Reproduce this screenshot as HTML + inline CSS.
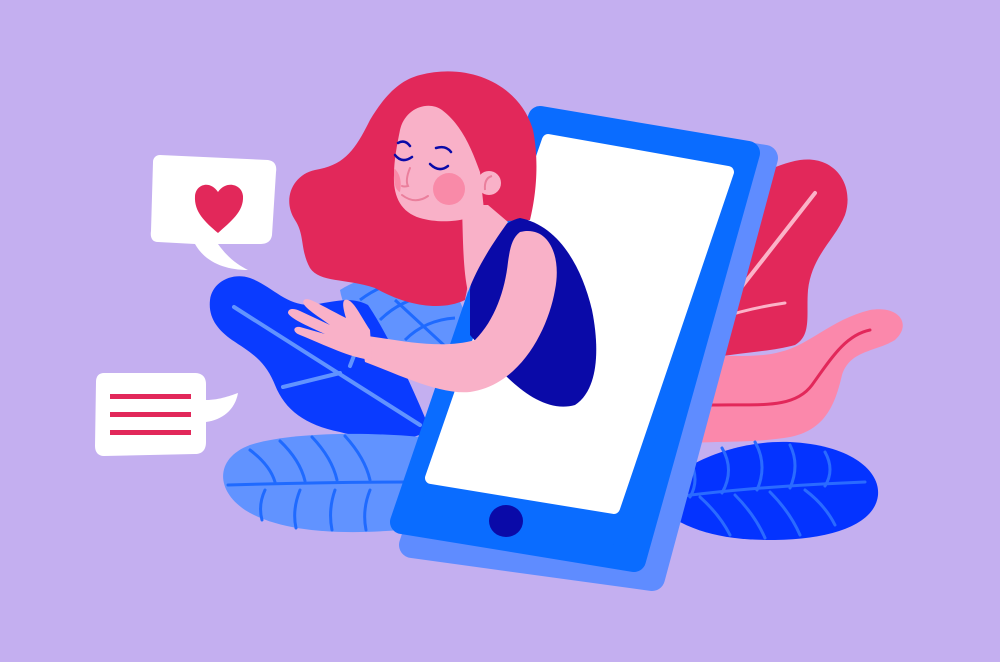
<!DOCTYPE html>
<html><head><meta charset="utf-8"><style>
html,body{margin:0;padding:0;background:#c4aff0;}
svg{display:block}
</style></head><body>
<svg width="1000" height="662" viewBox="0 0 1000 662" xmlns="http://www.w3.org/2000/svg">
<rect width="1000" height="662" fill="#c4aff0"/>

<!-- red leaf right -->
<path d="M720,200 C740,185 770,165 800,160 C835,155 855,185 845,215 C835,240 812,255 808,290 C806,315 812,335 795,345 C770,352 740,352 700,360 Z" fill="#e2285a"/>
<path d="M815,193 L722,312" stroke="#fbb3c8" stroke-width="4" stroke-linecap="round"/>
<path d="M785,303 Q750,308 720,318" stroke="#fbb3c8" stroke-width="3" fill="none" stroke-linecap="round"/>

<!-- pink leaf -->
<path d="M690,360 C720,352 750,360 780,352 C810,345 830,320 870,310 C900,305 912,325 895,340 C875,352 850,350 842,375 C835,405 825,430 790,437 C750,444 710,440 670,445 Z" fill="#fb88ab"/>
<path d="M688,407 C740,400 790,415 812,385 C830,360 845,335 870,330" stroke="#e2285a" stroke-width="3" fill="none" stroke-linecap="round"/>

<!-- dark blue leaf right bottom -->
<path d="M650,500 C680,460 740,440 790,442 C850,445 880,470 878,495 C875,525 830,540 770,540 C720,540 680,530 650,500 Z" fill="#0433ff"/>
<g stroke="#2a6bff" stroke-width="3" fill="none" stroke-linecap="round">
<path d="M655,500 C720,490 790,485 865,482"/>
<path d="M690,460 Q700,480 690,497"/><path d="M722,448 Q735,470 722,493"/><path d="M755,442 Q768,465 757,490"/><path d="M790,445 Q800,465 790,488"/><path d="M825,452 Q835,470 825,486"/>
<path d="M700,497 Q720,515 730,535"/><path d="M735,495 Q755,515 765,538"/><path d="M770,492 Q790,512 800,535"/><path d="M805,490 Q825,505 835,525"/>
</g>

<!-- light blue leaf behind hair -->
<path d="M340,290 C370,270 420,270 450,290 C470,305 470,340 455,360 L400,360 C370,340 345,320 340,290 Z" fill="#6193ff"/>
<g stroke="#1f6aff" stroke-width="3" fill="none"><path d="M360,300 Q380,285 400,282"/><path d="M380,320 Q400,300 430,295"/><path d="M405,340 Q425,320 455,318"/><path d="M395,300 L460,360"/></g>

<!-- dark blue leaf left -->
<path d="M210,300 C212,282 232,272 250,278 C272,286 285,305 310,305 C330,303 350,295 368,305 C385,330 410,380 430,430 C405,445 370,440 340,432 C305,425 285,410 275,385 C265,360 250,352 232,340 C218,330 208,318 210,300 Z" fill="#0a3bff"/>
<g stroke="#6193ff" stroke-width="4" fill="none" stroke-linecap="round"><path d="M234,307 L420,425"/><path d="M283,387 L340,373"/><path d="M350,366 L360,340"/></g>

<!-- lower left light blue leaf -->
<path d="M420,437 C370,432 290,432 250,445 C215,458 215,490 245,510 C280,532 340,535 400,530 Z" fill="#6193ff"/>
<g stroke="#1f6aff" stroke-width="3" fill="none" stroke-linecap="round">
<path d="M228,485 C290,483 350,482 410,482"/>
<path d="M250,450 Q270,465 275,482"/><path d="M280,441 Q300,460 305,481"/><path d="M312,437 Q332,458 337,480"/><path d="M345,436 Q365,458 370,480"/>
<path d="M265,490 Q258,505 262,520"/><path d="M300,490 Q292,510 296,528"/><path d="M335,490 Q328,510 332,530"/><path d="M370,490 Q362,510 366,530"/>
</g>

<!-- phone side -->
<polygon points="552,122 765,158 652,578 412,545" fill="#5f8cff" stroke="#5f8cff" stroke-width="26" stroke-linejoin="round"/>
<!-- phone front -->
<polygon points="540,118 748,153 634,560 402,522" fill="#0a6cff" stroke="#0a6cff" stroke-width="24" stroke-linejoin="round"/>
<polygon points="548,140 728,172 614,508 431,478" fill="#ffffff" stroke="#ffffff" stroke-width="12" stroke-linejoin="round"/>
<ellipse cx="506" cy="521" rx="17" ry="16" fill="#0a0aa8"/>

<!-- hair -->
<path d="M420,75 C470,62 520,85 533,130 C540,165 535,200 530,220 L480,222 L465,300 C440,312 405,305 375,288 C345,278 320,283 310,268 C300,250 305,235 295,220 C282,200 292,175 315,170 C345,165 355,150 370,120 C385,95 400,80 420,75 Z" fill="#e2285a"/>

<!-- body top navy -->
<path d="M470,290 C475,250 500,222 520,218 C555,225 580,260 592,310 C600,350 598,390 575,405 C550,412 525,395 505,375 L470,335 Z" fill="#0a0aa8"/>

<!-- neck/chest -->
<path d="M462,205 L488,205 L508,222 C495,240 478,265 468,292 C463,270 463,240 462,205 Z" fill="#f9b1c8"/>

<!-- face -->
<path d="M400,130 C405,108 428,100 442,110 C462,125 472,150 480,172 L484,210 C470,222 440,224 420,218 C400,212 393,195 394,175 C394,160 397,145 400,130 Z" fill="#f9b1c8"/>
<circle cx="489" cy="183" r="12" fill="#f9b1c8"/>
<path d="M485,190 Q484,178 492,176" stroke="#ea7f9c" stroke-width="2" fill="none"/>
<circle cx="449" cy="189" r="16" fill="#f98aa8"/>
<path d="M394,168 Q403,176 400,192 Q394,190 394,175 Z" fill="#f98aa8"/>
<g stroke="#0a0aa8" stroke-width="2.5" fill="none" stroke-linecap="round">
<path d="M395,155 Q402,164 412,157"/><path d="M398,143 Q405,139 410,146"/>
<path d="M430,164 Q439,173 448,166"/><path d="M436,148 Q446,145 451,152"/>
</g>
<g stroke="#ea7f9c" stroke-width="2" fill="none" stroke-linecap="round">
<path d="M410,168 Q405,180 408,186 Q404,187 402,186"/>
<path d="M402,195 Q415,205 428,196"/>
</g>

<!-- arm -->
<path d="M520,232 C548,225 562,255 555,290 C548,330 520,385 470,392 C440,395 400,375 365,362 L360,335 C400,340 440,350 475,340 C495,320 505,290 508,262 C510,248 512,238 520,232 Z" fill="#f9b1c8"/>
<!-- hand -->
<path d="M372,360 C350,358 325,345 300,335 C292,332 293,326 300,327 L325,334 C305,325 290,318 288,313 C288,308 294,308 300,311 L330,325 C312,312 300,305 304,300 C308,297 315,302 340,315 L346,318 C342,305 342,298 348,300 C355,303 360,315 370,330 Z" fill="#f9b1c8"/>

<!-- heart bubble -->
<path d="M160,155 L268,160 C275,161 277,166 276,172 L272,235 C271,242 266,244 260,244 L218,244 C228,258 238,265 248,270 C225,270 205,262 195,244 L158,242 C152,242 150,237 151,231 L153,162 C153,158 156,155 160,155 Z" fill="#ffffff"/>
<path d="M218,233 C205,222 194,212 195,196 C196,184 210,180 218,192 C226,180 242,184 243,196 C244,212 230,222 218,233 Z" fill="#e2285a"/>

<!-- lines bubble -->
<path d="M104,373 L195,373 C202,373 206,377 206,384 L206,400 C220,400 232,395 238,393 C235,410 222,420 206,422 L206,442 C206,450 202,454 195,454 L104,456 C98,456 95,452 95,446 L96,382 C96,376 99,373 104,373 Z" fill="#ffffff"/>
<g fill="#e2285a"><rect x="110" y="394" width="81" height="5"/><rect x="110" y="412" width="81" height="5"/><rect x="110" y="430" width="81" height="5"/></g>
</svg>
</body></html>
